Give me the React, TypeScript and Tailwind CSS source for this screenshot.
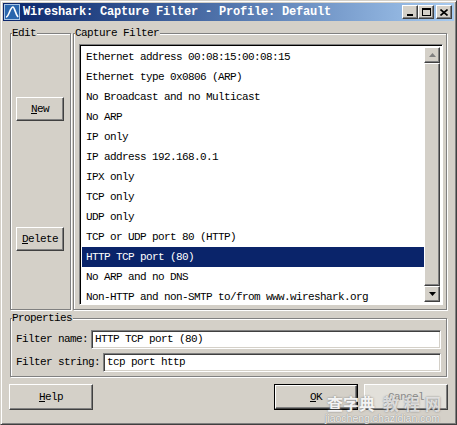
import React from "react"

const filters = [
  "Ethernet address 00:08:15:00:08:15",
  "Ethernet type 0x0806 (ARP)",
  "No Broadcast and no Multicast",
  "No ARP",
  "IP only",
  "IP address 192.168.0.1",
  "IPX only",
  "TCP only",
  "UDP only",
  "TCP or UDP port 80 (HTTP)",
  "HTTP TCP port (80)",
  "No ARP and no DNS",
  "Non-HTTP and non-SMTP to/from www.wireshark.org",
]

const raised =
  "bg-[#d4d0c8] border border-t-white border-l-white border-r-[#404040] border-b-[#404040] shadow-[inset_-1px_-1px_0_#808080]"
const sunken =
  "bg-white border border-t-[#808080] border-l-[#808080] border-r-white border-b-white shadow-[inset_1px_1px_0_#404040,inset_-1px_-1px_0_#d4d0c8]"

function GroupBox({ label, className, children }: { label: string; className: string; children?: React.ReactNode }) {
  return (
    <div
      className={`relative border border-[#808080] shadow-[inset_1px_1px_0_#fff,1px_1px_0_#fff] ${className}`}
    >
      <span className="absolute -top-[8px] left-[1px] bg-[#d4d0c8] pr-[1px] leading-[14px]">{label}</span>
      {children}
    </div>
  )
}

function Button({ children, className = "" }: { children: React.ReactNode; className?: string }) {
  return <div className={`${raised} flex items-center justify-center ${className}`}>{children}</div>
}

function TitleButton({ children, className = "" }: { children: React.ReactNode; className?: string }) {
  return (
    <div className={`${raised} w-[16px] h-[14px] flex items-center justify-center ${className}`}>{children}</div>
  )
}

export default function App() {
  return (
    <div className="relative w-[457px] h-[425px] bg-[#d4d0c8] border border-t-[#d4d0c8] border-l-[#d4d0c8] border-r-[#404040] border-b-[#404040] shadow-[inset_1px_1px_0_#fff,inset_-1px_-1px_0_#808080] p-[2px] flex flex-col font-['Liberation_Mono',monospace] text-[11px] tracking-[-0.6px] text-black overflow-hidden">
      {/* Title bar */}
      <div className="h-[18px] flex items-center bg-gradient-to-r from-[#0a246a] to-[#a6caf0] pl-[1px] pr-[2px]">
        <svg width="16" height="16" viewBox="0 0 16 16" className="shrink-0">
          <rect x="0.5" y="0.5" width="15" height="15" fill="#2a66ad" stroke="#a9c6e6" />
          <path d="M2 13 C5 13 6 3 9 3 C10.5 3 11 9 14 13" fill="none" stroke="#fff" strokeWidth="1.6" />
        </svg>
        <span className="ml-[3px] text-white font-bold text-[12px] tracking-[-0.2px] leading-none">
          Wireshark: Capture Filter - Profile: Default
        </span>
        <div className="ml-auto flex items-center">
          <TitleButton>
            <div className="w-[6px] h-[2px] bg-black mt-[6px] -ml-[1px]" />
          </TitleButton>
          <TitleButton>
            <div className="w-[9px] h-[8px] border border-black border-t-2" />
          </TitleButton>
          <TitleButton className="ml-[2px]">
            <svg width="8" height="7" viewBox="0 0 8 7">
              <path d="M0.5 0.5 L7.5 6.5 M7.5 0.5 L0.5 6.5" stroke="#000" strokeWidth="1.6" />
            </svg>
          </TitleButton>
        </div>
      </div>

      <div className="flex flex-col px-[7px] pt-[12px]">
        <div className="flex gap-[2px] h-[277px]">
          <GroupBox label="Edit" className="w-[61px] flex flex-col pl-[5px]">
            <Button className="mt-[63px] w-[48px] h-[24px]">
              <span><span className="underline">N</span>ew</span>
            </Button>
            <Button className="mt-[106px] w-[48px] h-[24px]">
              <span><span className="underline">D</span>elete</span>
            </Button>
          </GroupBox>

          <GroupBox label="Capture Filter" className="flex-1 pl-[5px] pt-[10px]">
            <div className="w-[364px] h-[261px] p-[2px] flex border border-t-[#808080] border-l-[#808080] border-r-white border-b-white shadow-[inset_1px_1px_0_#000] bg-white">
              <div className="flex-1 overflow-hidden">
                {filters.map((f) => {
                  const selected = f === "HTTP TCP port (80)"
                  return (
                    <div
                      key={f}
                      className={`h-[20px] flex items-center pl-[4px] whitespace-nowrap ${
                        selected ? "bg-[#0a246a] text-white" : ""
                      }`}
                    >
                      {f}
                    </div>
                  )
                })}
              </div>
              <div className="w-[16px] flex flex-col bg-[#e8e6e2]">
                <div className={`${raised} h-[16px] flex items-center justify-center`}>
                  <svg width="7" height="4" viewBox="0 0 7 4">
                    <path d="M3.5 0 L7 4 L0 4 Z" fill="#808080" />
                  </svg>
                </div>
                <div className={`${raised} flex-1`} />
                <div className={`${raised} h-[16px] flex items-center justify-center`}>
                  <svg width="7" height="4" viewBox="0 0 7 4">
                    <path d="M0 0 L7 0 L3.5 4 Z" fill="#000" />
                  </svg>
                </div>
              </div>
            </div>
          </GroupBox>
        </div>

        <GroupBox label="Properties" className="mt-[8px] h-[59px] flex flex-col pl-[5px] pr-[5px] pt-[11px] gap-[4px]">
          <div className="flex items-center">
            <span className="w-[75px] whitespace-nowrap">Filter name:</span>
            <div className={`${sunken} flex-1 h-[19px] flex items-center pl-[3px]`}>HTTP TCP port (80)</div>
          </div>
          <div className="flex items-center">
            <span className="w-[87px] whitespace-nowrap">Filter string:</span>
            <div className={`${sunken} flex-1 h-[19px] flex items-center pl-[3px]`}>tcp port http</div>
          </div>
        </GroupBox>

        <div className="mt-[7px] flex items-center -ml-[1px] -mr-[1px]">
          <Button className="w-[84px] h-[26px]">
            <span><span className="underline">H</span>elp</span>
          </Button>
          <div className="ml-auto flex gap-[6px]">
            <div className="border border-black">
              <Button className="w-[82px] h-[24px]">
                <span><span className="underline">O</span>K</span>
              </Button>
            </div>
            <Button className="w-[84px] h-[26px] bg-[#e2e0da]">
              <span className="text-[#8a8a8a]"><span className="underline">C</span>ancel</span>
            </Button>
          </div>
        </div>
      </div>

      {/* watermark */}
      <div className="absolute left-[326px] top-[393px] flex flex-col pointer-events-none">
        <span className="font-['Noto_Sans_CJK_SC',sans-serif] font-bold text-[16px] leading-[18px] tracking-[0px] text-white/90 [text-shadow:0_0_2px_#777]">
          查字典<span className="ml-[8px] tracking-[5px] text-white/70">教程网</span>
        </span>
        <span className="-ml-[2px] font-['Liberation_Sans',sans-serif] text-[10.5px] tracking-[0px] text-white/90 leading-[12px] [text-shadow:0_0_1px_#555]">
          jiaocheng.chazidian.com
        </span>
      </div>
    </div>
  )
}
